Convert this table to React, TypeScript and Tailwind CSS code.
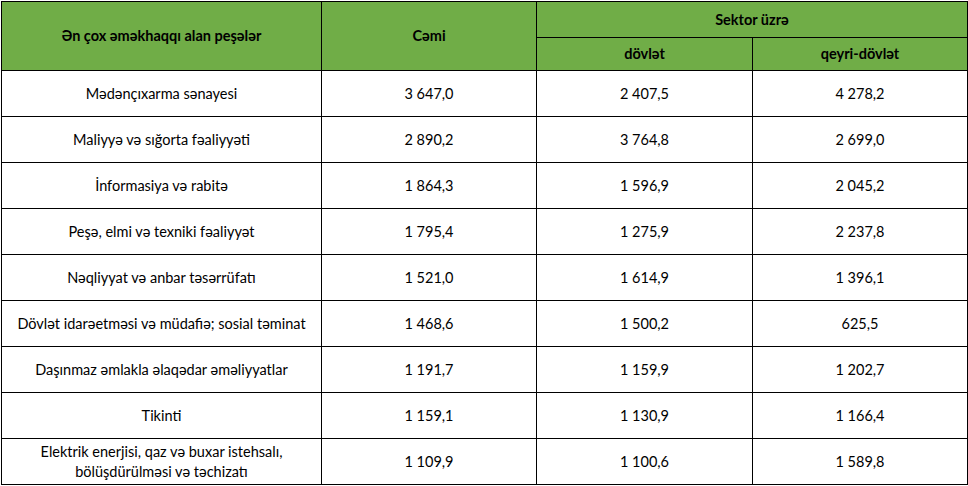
const rows: [string, string, string, string][] = [
  ["Mədənçıxarma sənayesi", "3 647,0", "2 407,5", "4 278,2"],
  ["Maliyyə və sığorta fəaliyyəti", "2 890,2", "3 764,8", "2 699,0"],
  ["İnformasiya və rabitə", "1 864,3", "1 596,9", "2 045,2"],
  ["Peşə, elmi və texniki fəaliyyət", "1 795,4", "1 275,9", "2 237,8"],
  ["Nəqliyyat və anbar təsərrüfatı", "1 521,0", "1 614,9", "1 396,1"],
  ["Dövlət idarəetməsi və müdafiə; sosial təminat", "1 468,6", "1 500,2", "625,5"],
  ["Daşınmaz əmlakla əlaqədar əməliyyatlar", "1 191,7", "1 159,9", "1 202,7"],
  ["Tikinti", "1 159,1", "1 130,9", "1 166,4"],
  ["Elektrik enerjisi, qaz və buxar istehsalı, bölüşdürülməsi və təchizatı", "1 109,9", "1 100,6", "1 589,8"],
];

export default function App() {
  return (
    <div className="w-[968px] h-[486px] bg-white pl-[1px] pt-[1px] font-['Lato',sans-serif] text-[14.5px] text-black">
      <table className="w-[966px] table-fixed border-collapse">
        <colgroup>
          <col className="w-[320px]" />
          <col className="w-[215px]" />
          <col className="w-[216px]" />
          <col className="w-[215px]" />
        </colgroup>
        <thead className="bg-[#70ad47] text-black">
          <tr className="h-[36px]">
            <th rowSpan={2} className="border border-black font-bold">Ən çox əməkhaqqı alan peşələr</th>
            <th rowSpan={2} className="border border-black font-bold">Cəmi</th>
            <th colSpan={2} className="border border-black font-bold">Sektor üzrə</th>
          </tr>
          <tr className="h-[33px]">
            <th className="border border-black font-bold">dövlət</th>
            <th className="border border-black font-bold">qeyri-dövlət</th>
          </tr>
        </thead>
        <tbody>
          {rows.map(([name, total, state, nonState]) => (
            <tr key={name} className="h-[46px]">
              <td className="border border-black px-1 text-center leading-[20px]">
                <div className="mx-auto max-w-[300px]">{name}</div>
              </td>
              <td className="border border-black text-center">{total}</td>
              <td className="border border-black text-center">{state}</td>
              <td className="border border-black text-center">{nonState}</td>
            </tr>
          ))}
        </tbody>
      </table>
    </div>
  );
}
